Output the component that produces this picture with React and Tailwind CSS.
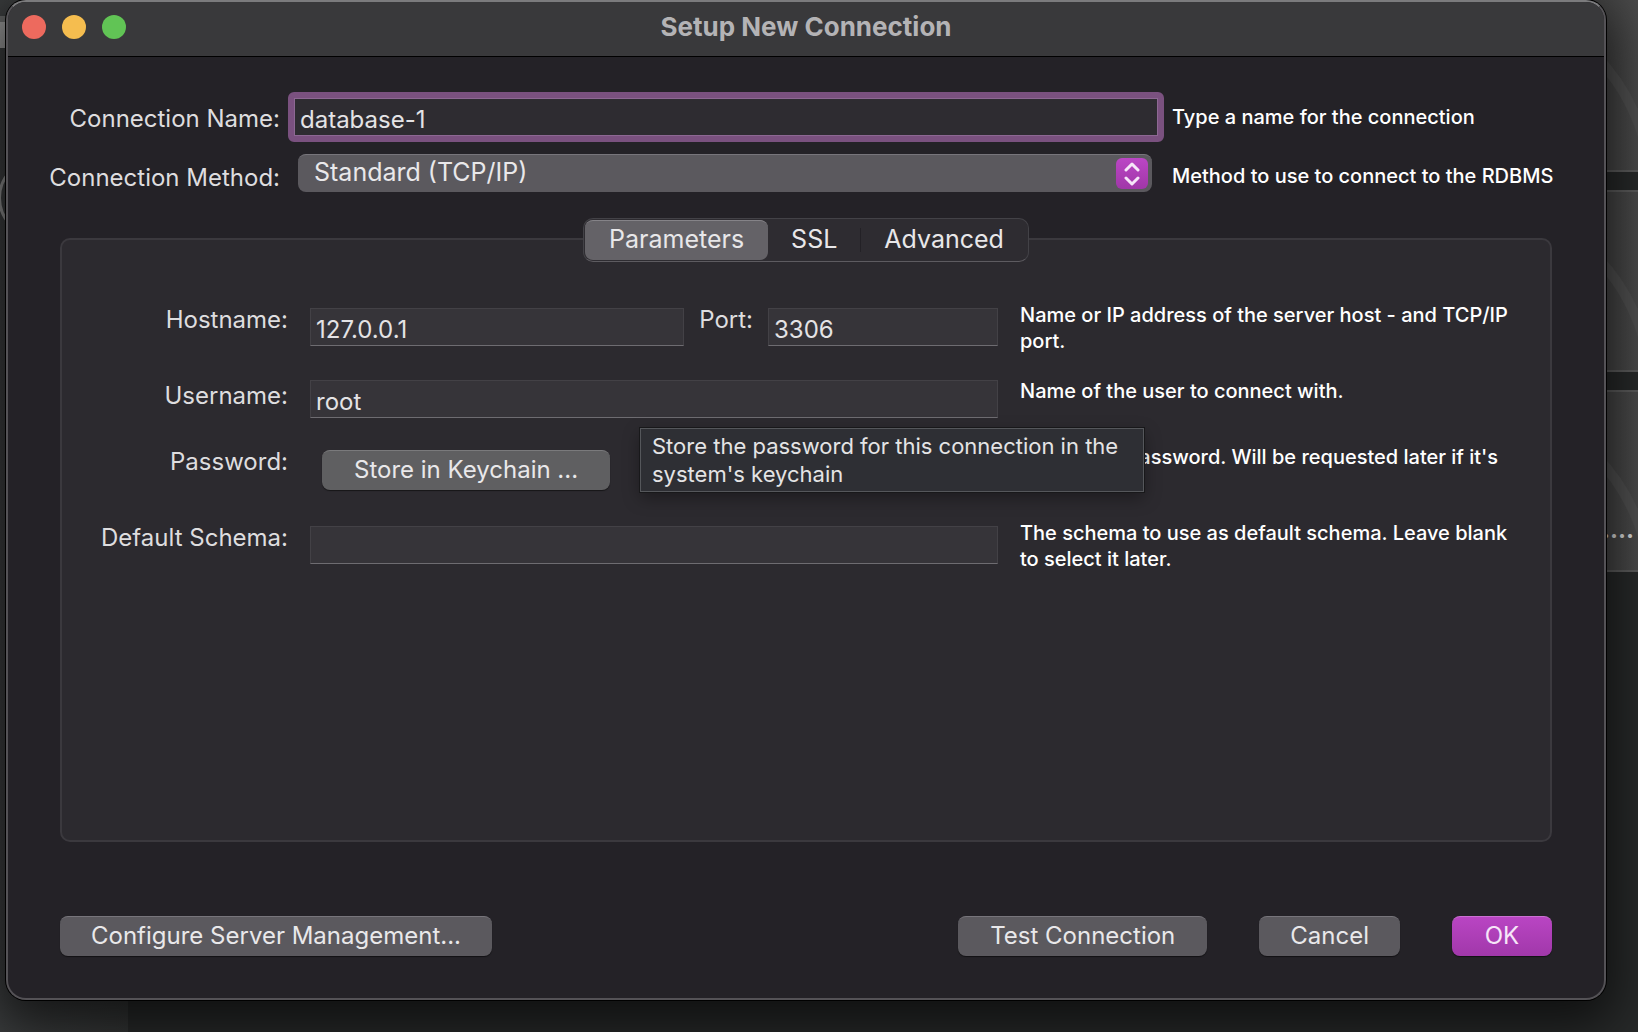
import React from "react";

const label = "text-right text-[24px] leading-8 text-[#dedddf] whitespace-nowrap";
const rowLabel = `${label} pt-[2px]`;
const hint = "text-[20px] leading-[26px] font-medium text-white";
const field =
  "block h-[38px] w-full min-w-0 border border-[#434146] border-b-[#6e6c71] bg-[#363439] px-[5px] pt-1 text-[24px] text-[#e4e3e5] outline-none";
const buttonBase =
  "h-10 shrink-0 rounded-lg border-t pb-0.5 text-[24px] leading-8 shadow-[0_1px_1px_rgba(0,0,0,0.5)] whitespace-nowrap";
const button = `${buttonBase} border-[#77757b] bg-[#5b595e] text-[#e9e8ea]`;

function Card({ className, children }) {
  return (
    <div className={`absolute right-0 h-[182px] w-12 overflow-hidden border-y-2 border-[#5c5c5c] bg-gradient-to-r from-[#434343] to-[#4a4a4a] ${className}`}>
      <div className="absolute top-0 -left-[334px] size-[400px] rounded-full border-[10px] border-[#505050]" />
      {children}
    </div>
  );
}

function Backdrop() {
  return (
    <div className="absolute inset-0 overflow-hidden bg-[#272929]" aria-hidden="true">
      <div className="absolute bottom-0 left-0 h-full w-32 bg-gradient-to-r from-[#3a3c3d] to-[#323434]" />
      <div className="absolute top-4 left-0 h-8 w-2 border-t-[6px] border-[#626363] bg-[#929292]" />
      <div className="absolute top-[158px] -left-0.5 size-20 rounded-full border-[3px] border-[#8a8a8a]" />
      <Card className="-top-[10px]" />
      <Card className="top-[190px]" />
      <Card className="top-[390px]">
        <span className="absolute right-1 bottom-6 text-[24px] leading-8 font-bold text-[#dcdcdc]">....</span>
      </Card>
    </div>
  );
}

function Header() {
  return (
    <header className="flex h-[55px] items-center border-b border-black bg-[#39393b] px-[14px] pb-1">
      <div className="flex flex-1 gap-4">
        <button aria-label="Close" className="size-6 rounded-full bg-[#ed6a5e]" />
        <button aria-label="Minimize" className="size-6 rounded-full bg-[#f5bd4f]" />
        <button aria-label="Zoom" className="size-6 rounded-full bg-[#61c455]" />
      </div>
      <h1 className="text-[26px] leading-8 font-bold text-[#b4b3b5]">Setup New Connection</h1>
      <div className="flex-1" />
    </header>
  );
}

function Tabs() {
  const tab = "h-10 text-[25px] leading-8 text-[#e8e7e9]";
  return (
    <div role="tablist" className="relative z-10 mx-auto flex w-fit items-center rounded-[10px] border border-[#434247] border-b-[#5d5b60] bg-[#2e2c31] p-px">
      <button role="tab" aria-selected="true" className={`${tab} rounded-lg border-t border-[#858388] bg-[#646267] px-6 pb-[3px]`}>
        Parameters
      </button>
      <button role="tab" aria-selected="false" className={`${tab} px-[23px] pb-0.5`}>SSL</button>
      <span className="h-6 w-px bg-[#232126]" />
      <button role="tab" aria-selected="false" className={`${tab} px-[23px] pb-0.5`}>Advanced</button>
    </div>
  );
}

export default function App() {
  return (
    <div className="relative min-h-screen overflow-hidden pr-8 pb-8 pl-[6px] font-[Inter,'Liberation_Sans',sans-serif]">
      <Backdrop />
      <main className="relative flex min-h-[1000px] flex-col overflow-hidden rounded-[20px] border-2 border-[#545256] border-t-[#7b7b7d] bg-[#242227] shadow-[0_0_0_1px_black,0_16px_50px_10px_rgba(0,0,0,0.6)]">
        <Header />
        <div className="grid grid-cols-[272px_1fr_388px] items-start pt-[35px] pr-11">
          <label htmlFor="name" className={`${label} mt-[11px]`}>Connection Name:</label>
          <input id="name" defaultValue="database-1" className="mr-2 ml-2 h-[50px] min-w-0 rounded-md border-[6px] border-[#7a517f] bg-[#2e2c31] px-[6px] pt-1 text-[24px] text-[#e4e3e5] shadow-[inset_0_0_0_1px_#8d6893] outline-none" />
          <p className={`${hint} mt-3 whitespace-nowrap`}>Type a name for the connection</p>
        </div>
        <div className="grid grid-cols-[272px_1fr_388px] items-start pt-3 pr-11">
          <label htmlFor="method" className={`${label} mt-2`}>Connection Method:</label>
          <div className="relative mr-5 ml-[18px]">
            <select id="method" className="block h-[38px] w-full appearance-none rounded-lg border-t border-[#77757b] bg-[#5b595e] px-4 pb-1 text-[25px] leading-8 text-[#e9e8ea] outline-none">
              <option>Standard (TCP/IP)</option>
            </select>
            <span className="pointer-events-none absolute top-1 right-1 flex h-[31px] w-8 items-center justify-center rounded-md bg-gradient-to-b from-[#bb46c5] to-[#a037a8]">
              <svg width="16" height="24" viewBox="0 0 16 24" fill="none" stroke="#f6e6f8" strokeWidth="3" strokeLinecap="round" strokeLinejoin="round">
                <path d="M2 8l6-6 6 6M2 16l6 6 6-6" />
              </svg>
            </span>
          </div>
          <p className={`${hint} mt-[9px] whitespace-nowrap`}>Method to use to connect to the RDBMS</p>
        </div>
        <section className="mx-[52px] mt-6 flex flex-1 flex-col">
          <Tabs />
          <div className="-mt-6 flex-1 rounded-[10px] border-2 border-[#3b393e] bg-[#2c2a2f] pt-[62px]">
            <div className="grid grid-cols-[225px_688px_1fr] grid-rows-[76px_66px_76px_auto] gap-x-[22px] pr-[30px] pl-px">
              <label htmlFor="host" className={rowLabel}>Hostname:</label>
              <div className="flex items-start pt-1.5">
                <input id="host" defaultValue="127.0.0.1" className={field} />
                <label htmlFor="port" className={`${label} -mt-1 px-[15px]`}>Port:</label>
                <div className="w-[230px] shrink-0">
                  <input id="port" defaultValue="3306" className={field} />
                </div>
              </div>
              <p className={hint}>Name or IP address of the server host - and TCP/IP port.</p>

              <label htmlFor="user" className={rowLabel}>Username:</label>
              <div className="pt-0.5">
                <input id="user" defaultValue="root" className={field} />
              </div>
              <p className={hint}>Name of the user to connect with.</p>

              <span className={rowLabel}>Password:</span>
              <div className="relative z-10 pt-1.5 pl-3">
                <button aria-describedby="keychain-tip" className={`${buttonBase} border-[#7a7a7c] bg-[#5f5f61] px-8 text-[#e9e8ea]`}>
                  Store in Keychain ...
                </button>
                <div id="keychain-tip" role="tooltip" className="absolute -top-4 left-[330px] w-[504px] border border-[#55575b] bg-[#2e2f34] px-[11px] pt-[3px] pb-[3px] text-[22px] leading-7 text-[#e4e4e5] shadow-[0_0_0_1px_#18181a,0_6px_16px_rgba(0,0,0,0.35)]">
                  Store the password for this connection in the system's keychain
                </div>
              </div>
              <p className={`${hint} whitespace-nowrap`}>The user's password. Will be requested later if it's</p>

              <label htmlFor="schema" className={rowLabel}>Default Schema:</label>
              <div className="pt-1.5">
                <input id="schema" className={field} />
              </div>
              <p className={hint}>The schema to use as default schema. Leave blank to select it later.</p>
            </div>
          </div>
        </section>
        <footer className="mt-[74px] mb-[42px] flex justify-between px-[52px]">
          <button className={`${button} px-[31px]`}>Configure Server Management...</button>
          <div className="flex gap-[52px]">
            <button className={`${button} px-8`}>Test Connection</button>
            <button className={`${button} px-[31px]`}>Cancel</button>
            <button className={`${buttonBase} w-[100px] border-[#cb70d2] bg-gradient-to-b from-[#b945c3] to-[#a138aa] text-[#f6e6f8]`}>OK</button>
          </div>
        </footer>
      </main>
    </div>
  );
}
